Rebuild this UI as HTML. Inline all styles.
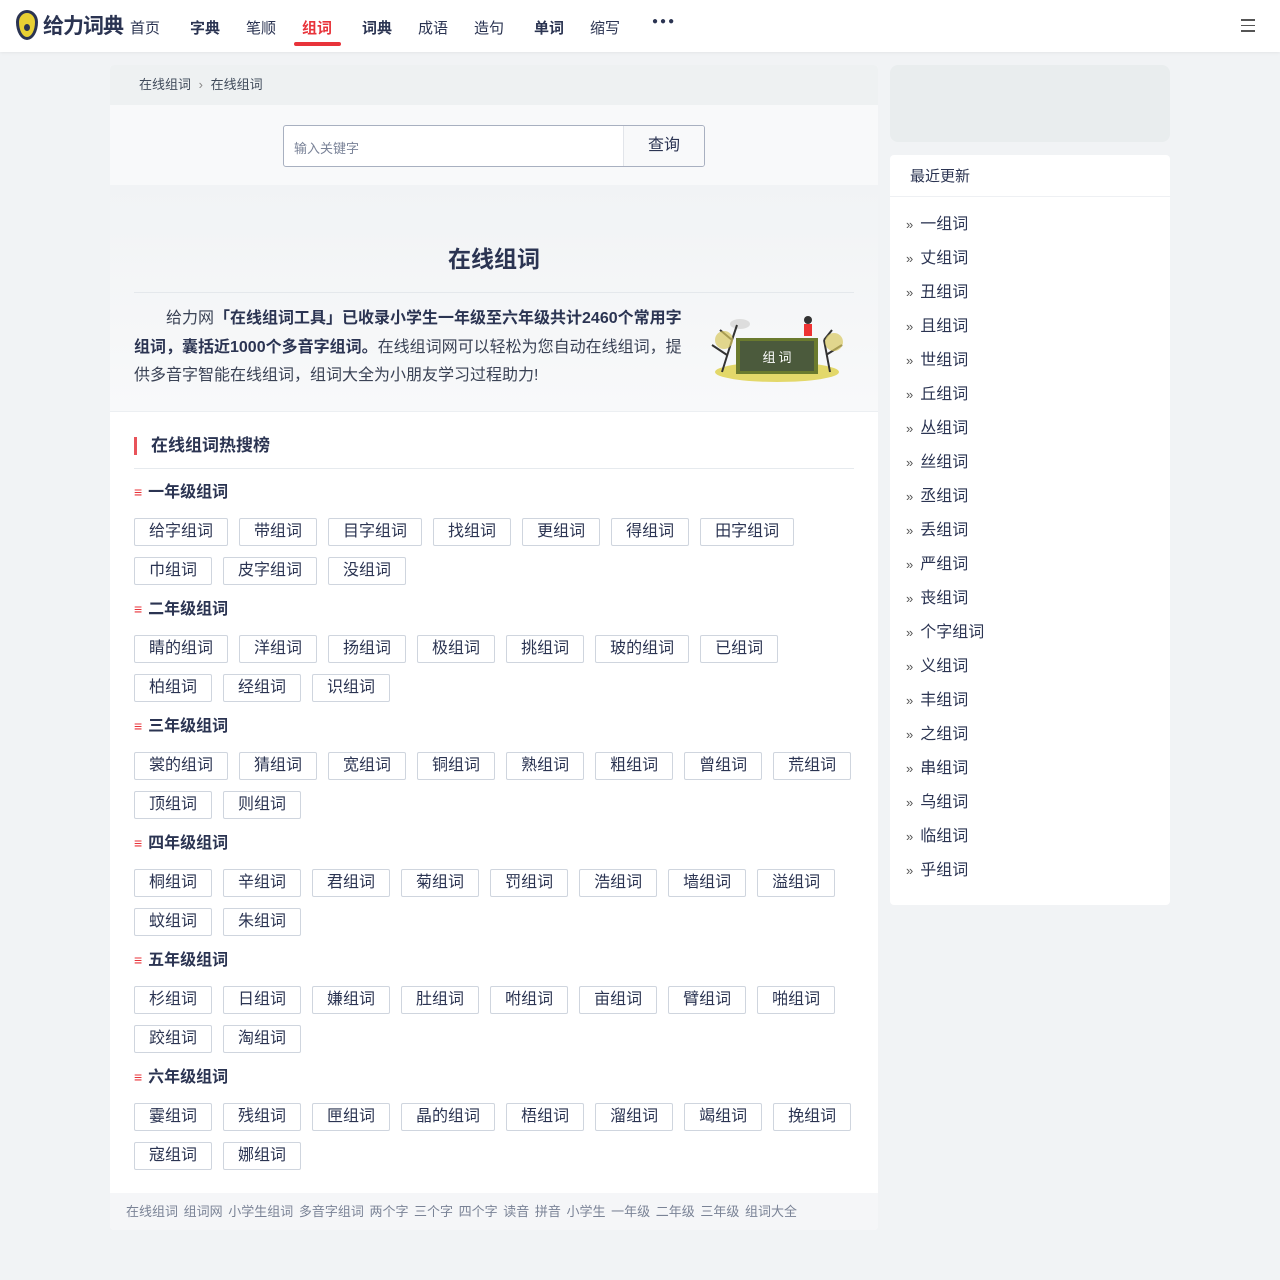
<!DOCTYPE html>
<html><head><meta charset="utf-8">
<style>
*{margin:0;padding:0;box-sizing:border-box}
body{width:1280px;height:1280px;background:#f1f3f5;font-family:"Liberation Sans","Noto Sans CJK SC",sans-serif;color:#2b3452;position:relative;overflow:hidden}
.top{position:absolute;left:0;top:0;width:1280px;height:52px;background:#fff;box-shadow:0 1px 3px rgba(0,0,0,.06)}
.logo{position:absolute;left:16px;top:10px;display:flex;align-items:center}
.six{width:22px;height:30px;border-radius:50% 50% 50% 50%/40% 40% 60% 60%;background:#e8d033;border:3px solid #2b3452;position:relative}
.six:after{content:"";position:absolute;left:5px;top:11px;width:6px;height:7px;border-radius:50%;background:#2b3452}
.logo b{font-size:21px;margin-left:5px;color:#2b3452;letter-spacing:-1px}
.nav{position:absolute;top:17px;font-size:15px;color:#2b3452}
.nav.bold{font-weight:bold}
.act{color:#e8333a}
.uline{position:absolute;left:294px;top:42px;width:47px;height:4px;border-radius:2px;background:#e8333a}
.main{position:absolute;left:110px;top:65px;width:768px;height:1165px;background:#fff;border-radius:4px;overflow:hidden}
.crumb{height:40px;background:#eef1f2;font-size:13px;line-height:40px;padding-left:29px;color:#3f4a5a}
.searcharea{height:80px;background:#f8f9fa;position:relative}
.sbox{position:absolute;left:173px;top:20px;width:422px;height:42px;border:1px solid #a8b0c0;border-radius:3px;background:#fff;overflow:hidden}
.sbox span{position:absolute;left:10px;top:12px;font-size:13px;color:#7a8398}
.sbox i{position:absolute;right:0;top:0;width:81px;height:40px;border-left:1px solid #e2e5ea;background:#f8f9fa;font-style:normal;font-size:16px;line-height:40px;text-align:center}
.hero{position:absolute;left:0;top:120px;width:768px;height:227px;background:linear-gradient(#f1f3f5,#f8f9fa);border-bottom:1px solid #eceff2}
.hero h1{position:absolute;left:0;width:768px;top:55px;text-align:center;font-size:23px}
.hero .ln{position:absolute;left:24px;right:24px;top:107px;border-top:1px solid #e4e8ec}
.hero p{position:absolute;left:24px;top:120px;width:556px;font-size:16px;line-height:28.5px;text-indent:32px;color:#3a4255}
.hero p b{color:#2b3452}
.hero svg{position:absolute;left:592px;top:125px}
.sec{position:absolute;left:24px;top:372px;width:720px}
.hot{font-size:17px;font-weight:bold;border-left:3px solid #e8535a;padding-left:14px;height:18px;line-height:18px}
.hl{border-top:1px solid #e6eaee;margin-top:13px}
.g{margin-top:13px;font-size:16px;font-weight:bold;height:20px;line-height:20px}
.g:before{content:"≡";color:#e8333a;font-weight:normal;margin-right:6px;font-size:14px}
.tags{display:flex;flex-wrap:wrap;width:730px;margin-top:16px}
.tags span{height:28px;line-height:26px;border:1px solid #cfd5de;border-radius:2px;padding:0 14px;font-size:16px;margin:0 11px 11px 0;color:#2b3452;white-space:nowrap}
.foot{position:absolute;left:0;top:1128px;width:768px;height:37px;background:#f5f6f8;font-size:13px;color:#7a8396;line-height:37px;padding-left:16px;word-spacing:2px}
.ad{position:absolute;left:890px;top:65px;width:280px;height:77px;background:#e9edee;border-radius:8px}
.side{position:absolute;left:890px;top:155px;width:280px;height:750px;background:#fff;border-radius:4px}
.side h3{font-size:15px;font-weight:normal;height:42px;line-height:44px;padding-left:20px;border-bottom:1px solid #eef0f3}
.side ul{list-style:none;padding:11px 0 0 16px}
.side li{height:34px;line-height:34px;font-size:16px}
.side li:before{content:"»";font-size:13px;color:#555;margin-right:7px}
.menu{position:absolute;left:1241px;top:19px;width:14px}
.menu i{display:block;height:1.5px;background:#555;margin-bottom:4px}
</style></head><body>
<div class="top">
 <div class="logo"><div class="six"></div><b>给力词典</b></div>
 <div class="nav" style="left:130px">首页</div>
 <div class="nav bold" style="left:190px">字典</div>
 <div class="nav" style="left:246px">笔顺</div>
 <div class="nav bold act" style="left:302px">组词</div>
 <div class="nav bold" style="left:362px">词典</div>
 <div class="nav" style="left:418px">成语</div>
 <div class="nav" style="left:474px">造句</div>
 <div class="nav bold" style="left:534px">单词</div>
 <div class="nav" style="left:590px">缩写</div>
 <div class="nav" style="left:652px;top:16px;font-size:10px;letter-spacing:2px">●●●</div>
 <div class="uline"></div>
 <div class="menu"><i></i><i></i><i></i></div>
</div>
<div class="main">
 <div class="crumb">在线组词 <span style="color:#888;margin:0 4px">›</span> 在线组词</div>
 <div class="searcharea"><div class="sbox"><span>输入关键字</span><i>查询</i></div></div>
 <div class="hero">
  <h1>在线组词</h1><div class="ln"></div>
  <p>给力网<b>「在线组词工具」已收录小学生一年级至六年级共计2460个常用字组词，囊括近1000个多音字组词。</b>在线组词网可以轻松为您自动在线组词，提供多音字智能在线组词，组词大全为小朋友学习过程助力!</p>
  <svg width="150" height="75" viewBox="0 0 150 75">
   <ellipse cx="75" cy="62" rx="62" ry="10" fill="#e3d86a"/>
   <ellipse cx="38" cy="14" rx="10" ry="5" fill="#ddd"/>
   <rect x="34" y="28" width="82" height="36" fill="#6a7a2e"/>
   <rect x="38" y="31" width="74" height="30" fill="#4b5a3c"/>
   <text x="75" y="52" font-size="13" fill="#fff" text-anchor="middle" font-family="Noto Sans CJK SC">组 词</text>
   <path d="M20 62 L30 30 M25 45 L10 35 M30 30 L18 20 M30 30 L35 15" stroke="#333" stroke-width="2" fill="none"/>
   <path d="M128 62 L122 30 M124 45 L140 35 M122 30 L130 20" stroke="#333" stroke-width="2" fill="none"/>
   <circle cx="22" cy="30" r="9" fill="#d8c860" opacity=".7"/>
   <circle cx="132" cy="32" r="9" fill="#d8c860" opacity=".7"/>
   <rect x="102" y="14" width="8" height="12" fill="#e33"/><circle cx="106" cy="10" r="4" fill="#333"/>
  </svg>
 </div>
 <div class="sec">
  <div class="hot">在线组词热搜榜</div><div class="hl"></div>
  <div class="g">一年级组词</div>
  <div class="tags"><span>给字组词</span><span>带组词</span><span>目字组词</span><span>找组词</span><span>更组词</span><span>得组词</span><span>田字组词</span><span>巾组词</span><span>皮字组词</span><span>没组词</span></div>
  <div class="g" style="margin-top:3px">二年级组词</div>
  <div class="tags"><span>睛的组词</span><span>洋组词</span><span>扬组词</span><span>极组词</span><span>挑组词</span><span>玻的组词</span><span>已组词</span><span>柏组词</span><span>经组词</span><span>识组词</span></div>
  <div class="g" style="margin-top:3px">三年级组词</div>
  <div class="tags"><span>裳的组词</span><span>猜组词</span><span>宽组词</span><span>铜组词</span><span>熟组词</span><span>粗组词</span><span>曾组词</span><span>荒组词</span><span>顶组词</span><span>则组词</span></div>
  <div class="g" style="margin-top:3px">四年级组词</div>
  <div class="tags"><span>桐组词</span><span>辛组词</span><span>君组词</span><span>菊组词</span><span>罚组词</span><span>浩组词</span><span>墙组词</span><span>溢组词</span><span>蚊组词</span><span>朱组词</span></div>
  <div class="g" style="margin-top:3px">五年级组词</div>
  <div class="tags"><span>杉组词</span><span>日组词</span><span>嫌组词</span><span>肚组词</span><span>咐组词</span><span>亩组词</span><span>臂组词</span><span>啪组词</span><span>跤组词</span><span>淘组词</span></div>
  <div class="g" style="margin-top:3px">六年级组词</div>
  <div class="tags"><span>霎组词</span><span>残组词</span><span>匣组词</span><span>晶的组词</span><span>梧组词</span><span>溜组词</span><span>竭组词</span><span>挽组词</span><span>寇组词</span><span>娜组词</span></div>
 </div>
 <div class="foot">在线组词 组词网 小学生组词 多音字组词 两个字 三个字 四个字 读音 拼音 小学生 一年级 二年级 三年级 组词大全</div>
</div>
<div class="ad"></div>
<div class="side"><h3>最近更新</h3><ul>
<li>一组词</li><li>丈组词</li><li>丑组词</li><li>且组词</li><li>世组词</li><li>丘组词</li><li>丛组词</li><li>丝组词</li><li>丞组词</li><li>丢组词</li><li>严组词</li><li>丧组词</li><li>个字组词</li><li>义组词</li><li>丰组词</li><li>之组词</li><li>串组词</li><li>乌组词</li><li>临组词</li><li>乎组词</li>
</ul></div>
</body></html>
